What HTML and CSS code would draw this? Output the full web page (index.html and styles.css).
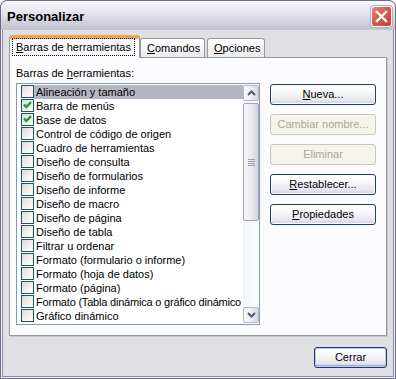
FILE: index.html
```html
<!DOCTYPE html>
<html lang="es">
<head>
<meta charset="utf-8">
<title>Personalizar</title>
<link rel="stylesheet" href="styles.css">
</head>
<body>
<div class="window">
  <div class="titlebar">
    <span class="title">Personalizar</span>
    <span class="close"><svg width="13" height="13" viewBox="0 0 13 13"><path d="M2 2 L11 11 M11 2 L2 11" stroke="#fff" stroke-width="2.4" stroke-linecap="square"/></svg></span>
  </div>
  <div class="frame">
    <div class="client">
      <div class="tabs">
        <div class="tab active"><span class="focus"><u>B</u>arras de herramientas</span></div>
        <div class="tab t2"><u>C</u>omandos</div>
        <div class="tab t3"><u>O</u>pciones</div>
      </div>
      <div class="panel">
        <div class="leftcol">
          <div class="label">Barras de <u>h</u>erramientas:</div>
          <div class="listbox">
            <div class="items">
              <div class="item"><span class="cb"></span><span class="txt sel">Alineación y tamaño</span></div>
              <div class="item"><span class="cb checked"><svg width="11" height="11" viewBox="0 0 11 11"><path d="M2 4.5 L4.3 7 L9 2.2" fill="none" stroke="#21a121" stroke-width="2.4"/></svg></span><span class="txt">Barra de menús</span></div>
              <div class="item"><span class="cb checked"><svg width="11" height="11" viewBox="0 0 11 11"><path d="M2 4.5 L4.3 7 L9 2.2" fill="none" stroke="#21a121" stroke-width="2.4"/></svg></span><span class="txt">Base de datos</span></div>
              <div class="item"><span class="cb"></span><span class="txt">Control de código de origen</span></div>
              <div class="item"><span class="cb"></span><span class="txt">Cuadro de herramientas</span></div>
              <div class="item"><span class="cb"></span><span class="txt">Diseño de consulta</span></div>
              <div class="item"><span class="cb"></span><span class="txt">Diseño de formularios</span></div>
              <div class="item"><span class="cb"></span><span class="txt">Diseño de informe</span></div>
              <div class="item"><span class="cb"></span><span class="txt">Diseño de macro</span></div>
              <div class="item"><span class="cb"></span><span class="txt">Diseño de página</span></div>
              <div class="item"><span class="cb"></span><span class="txt">Diseño de tabla</span></div>
              <div class="item"><span class="cb"></span><span class="txt">Filtrar u ordenar</span></div>
              <div class="item"><span class="cb"></span><span class="txt">Formato (formulario o informe)</span></div>
              <div class="item"><span class="cb"></span><span class="txt">Formato (hoja de datos)</span></div>
              <div class="item"><span class="cb"></span><span class="txt">Formato (página)</span></div>
              <div class="item"><span class="cb"></span><span class="txt tight">Formato (Tabla dinámica o gráfico dinámico</span></div>
              <div class="item"><span class="cb"></span><span class="txt">Gráfico dinámico</span></div>
            </div>
            <div class="scrollbar">
              <div class="sbtn"><svg width="9" height="6" viewBox="0 0 9 6"><path d="M1 5 L4.5 1.5 L8 5" fill="none" stroke="#4d5b7a" stroke-width="2"/></svg></div>
              <div class="thumb"><span class="grip"></span><span class="grip"></span><span class="grip"></span><span class="grip"></span></div>
              <div class="track"></div>
              <div class="sbtn"><svg width="9" height="6" viewBox="0 0 9 6"><path d="M1 1 L4.5 4.5 L8 1" fill="none" stroke="#4d5b7a" stroke-width="2"/></svg></div>
            </div>
          </div>
        </div>
        <div class="rightcol">
          <button class="btn"><u>N</u>ueva...</button>
          <button class="btn disabled">Cambiar nombre...</button>
          <button class="btn disabled">Eliminar</button>
          <button class="btn"><u>R</u>establecer...</button>
          <button class="btn"><u>P</u>ropiedades</button>
        </div>
      </div>
      <div class="footer">
        <button class="btn default close-btn">Cerrar</button>
      </div>
    </div>
  </div>
</div>
</body>
</html>
```
FILE: styles.css
```css
* { box-sizing: border-box; }
html, body { margin: 0; padding: 0; background: #ffffff; }
body {
  font-family: "Liberation Sans", Arial, sans-serif;
  font-size: 11px;
  color: #000;
}
u { text-decoration: underline; text-underline-offset: 1px; }

.window {
  width: 396px;
  height: 379px;
  display: flex;
  flex-direction: column;
  border: 1px solid #6c6b8c;
  border-radius: 7px 7px 0 0;
  overflow: hidden;
  background: #6c6b8c;
}

.titlebar {
  height: 29px;
  flex: none;
  display: flex;
  align-items: center;
  justify-content: space-between;
  padding: 0 3px 0 6px;
  background: linear-gradient(to bottom, #fdfdfe 0%, #eeeef3 20%, #e2e2ea 45%, #d3d2de 70%, #c2c1d1 100%);
}
.title {
  font-weight: bold;
  font-size: 13px;
  color: #000;
  padding-top: 1px;
}
.close {
  width: 21px;
  height: 21px;
  border: 1px solid #fff;
  border-radius: 3px;
  background: linear-gradient(to bottom right, #e98a80 0%, #d85c52 40%, #c64236 100%);
  box-shadow: 0 0 0 1px #b3aec4;
  display: flex;
  align-items: center;
  justify-content: center;
  margin-top: 1px;
}

.frame {
  flex: 1;
  display: flex;
  flex-direction: column;
  background: #f4f4f7;
  padding: 0 1px 1px;
}
.client {
  flex: 1;
  display: flex;
  flex-direction: column;
  background: #e0dfe3;
  border: 1px solid #8f8daa;
  border-top: none;
  padding: 5px 6px 0 6px;
}

.tabs {
  display: flex;
  align-items: flex-end;
  height: 22px;
  position: relative;
  z-index: 2;
}
.tab {
  height: 19px;
  border: 1px solid #919b9c;
  border-bottom: none;
  border-radius: 3px 3px 0 0;
  background: linear-gradient(to bottom, #ffffff 0%, #f6f6f8 50%, #ebebef 100%);
  padding: 2px 0 0 6px;
  line-height: 14px;
  white-space: nowrap;
}
.tab.active {
  width: 131px;
  height: 23px;
  margin-bottom: -1px;
  background: #fcfcfe;
  border-top: 3px solid #f2a83c;
  box-shadow: inset 0 1px 0 #ffc850;
  padding: 1px 0 0 3px;
}
.focus {
  display: inline-block;
  outline: 1px dotted #000;
  outline-offset: 0;
  padding: 1px 3px 1px 3px;
  line-height: 14px;
}
.tab.t2 { width: 65px; margin-left: 0; }
.tab.t3 { width: 58px; margin-left: 2px; }

.panel {
  height: 279px;
  flex: none;
  display: flex;
  background: #fcfcfe;
  border: 1px solid #919b9c;
  box-shadow: 1px 1px 0 #c5c4d3;
  padding: 9px 9px 0 6px;
  position: relative;
  z-index: 1;
}
.leftcol { display: flex; flex-direction: column; }
.label { line-height: 13px; height: 13px; }
.listbox {
  margin-top: 3px;
  width: 244px;
  height: 242px;
  border: 1px solid #7f9db9;
  background: #fff;
  display: flex;
  padding: 1px 0 1px 0;
}
.items {
  flex: 1;
  min-width: 0;
  overflow: hidden;
}
.item {
  height: 14px;
  display: flex;
  align-items: flex-start;
  padding-left: 4px;
}
.cb {
  width: 13px;
  height: 13px;
  flex: none;
  border: 1px solid #1c5180;
  background: linear-gradient(135deg, #dcdcd7 0%, #eeeee9 45%, #ffffff 100%);
  display: flex;
  align-items: center;
  justify-content: center;
}
.txt {
  flex: 1;
  min-width: 0;
  height: 14px;
  line-height: 14px;
  padding-left: 2px;
  white-space: nowrap;
  overflow: hidden;
}
.txt.tight { letter-spacing: -0.2px; }
.txt.sel { background: #b5b6c2; }

.scrollbar {
  width: 16px;
  flex: none;
  display: flex;
  flex-direction: column;
  background: linear-gradient(to right, #eef4f8, #fbfdfe);
}
.sbtn {
  height: 16px;
  flex: none;
  border: 1px solid #b6b5c6;
  border-radius: 2px;
  background: linear-gradient(to right, #fbfbfc 0%, #eeeef3 50%, #d6d5e0 100%);
  display: flex;
  align-items: center;
  justify-content: center;
}
.thumb {
  height: 118px;
  margin-top: 2px;
  flex: none;
  border: 1px solid #a3a2b7;
  border-radius: 2px;
  background: linear-gradient(to right, #f7f7f9 0%, #ebebf0 50%, #d4d3de 100%);
  display: flex;
  flex-direction: column;
  align-items: center;
  justify-content: center;
  gap: 1px;
}
.grip {
  width: 7px;
  height: 1px;
  background: #9a99ae;
}
.track { flex: 1; }

.rightcol {
  display: flex;
  flex-direction: column;
  gap: 9px;
  margin-left: 10px;
  padding-top: 17px;
}
.btn {
  width: 106px;
  height: 21px;
  font: inherit;
  color: #000;
  border: 1px solid #1f3b67;
  border-radius: 3px;
  background: linear-gradient(to bottom, #ffffff 0%, #f7f7f9 40%, #e6e5ee 80%, #cfcedc 100%);
  box-shadow: inset 0 0 0 1px #fbfbfc;
  padding: 0;
  line-height: 17px;
  text-align: center;
}
.btn.disabled {
  color: #aca899;
  border-color: #c9c7ba;
  background: #f5f4ea;
  box-shadow: none;
}
.footer {
  display: flex;
  justify-content: flex-end;
  padding-top: 11px;
}
.btn.close-btn {
  width: 73px;
  box-shadow: inset 0 0 0 1px #b9c9ef, inset 0 -1px 0 1px #97aee2;
}
```
